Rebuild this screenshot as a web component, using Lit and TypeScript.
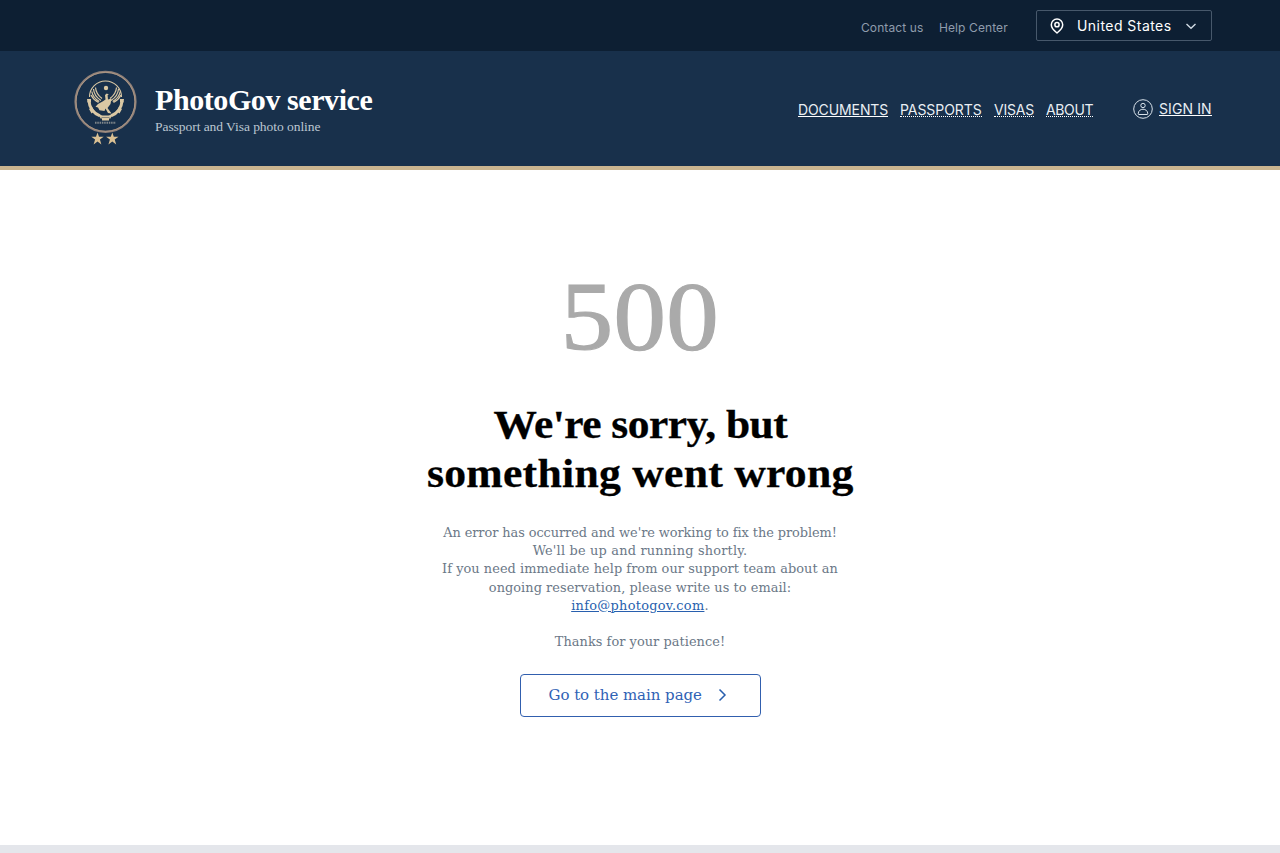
import { LitElement, html, css, svg } from "lit";
import { customElement } from "lit/decorators.js";

const emblem = svg`
  <circle cx="31.500" cy="31.800" r="30" fill="none" stroke="#8f8079" stroke-width="2.200"/>
  <circle cx="31.500" cy="31.800" r="29.500" fill="none" stroke="#b79f88" stroke-width=".7"/>
  <g fill="none" stroke="#dac8a4">
    <path d="M15.500 27A16 16 0 0 1 47.500 27" stroke-width="1.100"/>
    <path d="M15 31A16.500 16.500 0 0 0 26 45.800M48 31A16.500 16.500 0 0 1 37 45.800" stroke-width="3"/>
  </g>
  <g fill="#dac8a4">
    <circle cx="32" cy="18" r="2.200"/>
    <path d="M13 29h4v3.500h-3.500zM46 29h4l-.5 3.500H46zM15 39l3-2 2.500 4-3 2.500zM48 39l-3-2-2.500 4 3 2.500z"/>
    <path d="M31 25l1.800-1.500 2 1-1.200.8.4 4.200 3.500-1-1 5.500-3 4 4 5.500-3.500-.6-2.500-4.400-1 2.500-5-.8-1.500-2.700-2.500-.7 2.500-2.800 5-2.800 2.500-1.800z"/>
    <path d="M25 44.500l3.500 1h6l3.500-1-1.500 4h-1.500v2h-7v-2h-1.500z"/>
  </g>
  <path d="M27.500 47.500h8" stroke="#344457" stroke-width=".5"/>
  <g fill="none" stroke="#dac8a4" stroke-width="1.200">
    <path d="M21.500 17.500q.5 6.500 6.500 11M19.500 19q.5 7 7.500 11.500M17.800 21.500q1 6 7.500 10M17 25q2.500 5 7.500 7.500M42.500 17.500q-.5 6.500-6.500 11M44.500 19q-.5 7-7.500 11.500M46.200 21.500q-1 6-7.500 10M47 25q-2.500 5-7.500 7.500"/>
  </g>
  <path d="M21 52.700h21" stroke="#7f868a" stroke-width="2" stroke-dasharray="1.500 .8"/>
  <g fill="#dac093">
    <path d="M23.500 62.500l1.500 4.300h4.700l-3.800 2.700 1.500 4.900-3.900-2.900-3.900 2.900 1.500-4.900-3.800-2.700H22z"/>
    <path d="M38.300 62.500l1.500 4.300h4.700l-3.800 2.700 1.500 4.900-3.900-2.900-3.900 2.900 1.500-4.900-3.800-2.700h4.700z"/>
  </g>`;

@customElement("app-root")
export class AppRoot extends LitElement {
  static styles = css`
    :host { display: flex; flex-direction: column; height: 853px; overflow: hidden; background: #fff; font-family: Inter, "Liberation Sans", sans-serif; }
    * { box-sizing: border-box; }
    a { color: inherit; white-space: nowrap; }
    svg { display: block; flex: none; }
    .top { height: 51px; flex: none; display: flex; justify-content: flex-end; background: #0d1f33; padding: 10px 68px 0 0; }
    .aux { display: flex; gap: 16px; margin-right: 28px; padding-top: 9px; font-size: 12px; line-height: 18px; letter-spacing: .1px; color: #8f9cac; }
    .aux a { text-decoration: none; }
    .contact { width: 62px; }
    .help { width: 69px; }
    .country { width: 176px; height: 31px; border: 1px solid #47586b; border-radius: 2px; display: flex; align-items: center; padding: 0 13px 0 12px; color: #fff; font-size: 14px; letter-spacing: .45px; }
    .country span { width: 96px; margin-left: 12px; margin-right: 12px; white-space: nowrap; }
    .header { height: 119px; flex: none; background: #18304b; border-bottom: 4px solid #c9b48f; display: flex; padding: 19px 68px 0 74px; }
    .brand { margin-left: 18px; padding-top: 13px; font-family: "Liberation Serif", serif; color: #fff; white-space: nowrap; }
    .name { font-weight: 700; font-size: 30px; line-height: 34px; letter-spacing: -.42px; }
    .tag { margin-top: 1px; font-size: 13.5px; line-height: 17px; letter-spacing: -.05px; color: #bcc7d2; }
    .nav { display: flex; gap: 12px; margin-left: auto; padding-top: 30px; font-size: 14px; line-height: 20px; color: #e9eef3; }
    .nav a, .sign a { text-decoration: none; height: 17px; border-bottom: 1px dotted #fff; }
    .nav a.current, .sign a { border-bottom: 1px solid #fff; }
    .w1 { width: 90px; letter-spacing: -.1px; }
    .w2 { width: 82px; letter-spacing: -.06px; }
    .w3 { width: 40px; letter-spacing: -.2px; }
    .w4 { width: 47px; letter-spacing: -.35px; }
    .sign { display: flex; gap: 6px; margin-left: 40px; padding-top: 29px; font-size: 14px; line-height: 20px; color: #e9eef3; }
    .sign a { width: 53px; letter-spacing: .1px; }
    .main { height: 675px; flex: none; display: flex; flex-direction: column; align-items: center; font-family: "Liberation Serif", serif; text-align: center; white-space: nowrap; }
    .code { margin-top: 91px; height: 112px; line-height: 110px; font-size: 98px; letter-spacing: .3px; color: #aaa; -webkit-text-stroke: 1.2px #aaa; transform: scaleX(1.07); }
    h1 { margin: 27px 0 0; font-size: 41px; line-height: 49px; -webkit-text-stroke: .3px #000; }
    .h1a { letter-spacing: -.5px; transform: scaleX(1.06); }
    .h1b { letter-spacing: .25px; transform: scaleX(1.065); }
    .copy { margin-top: 26px; font-family: "DejaVu Serif", serif; font-size: 12.9px; line-height: 18.2px; color: #6b7887; }
    .copy a { color: #285fae; }
    .l1 { letter-spacing: -.06px; }
    .l2 { letter-spacing: .2px; }
    .l3, .l4, .l7 { letter-spacing: .05px; }
    .l5 { letter-spacing: .3px; }
    .gap { height: 18px; }
    .button { margin-top: 23px; width: 241px; height: 43px; border: 1px solid #315fae; border-radius: 4px; display: flex; align-items: center; padding: 0 0 1px 28px; color: #3062b5; font-family: "DejaVu Serif", serif; font-size: 15px; text-decoration: none; letter-spacing: -.05px; }
    .button span { width: 163px; text-align: left; }
    .footer { height: 8px; flex: none; background: #e4e6eb; }
  `;

  render() {
    return html`
      <div class="top">
        <div class="aux"><a class="contact" href="#">Contact us</a><a class="help" href="#">Help Center</a></div>
        <div class="country">
          <svg width="16" height="16" viewBox="0 0 16 16" fill="none" stroke="#fff" stroke-width="1.5"><path d="M8 15C5 12.7 2.3 10 2.3 6.8a5.7 5.7 0 0 1 11.4 0C13.700 10 11 12.700 8 15z"/><circle cx="8" cy="6.700" r="2.100"/></svg>
          <span>United States</span>
          <svg width="12" height="12" viewBox="0 0 12 12" fill="none" stroke="#d0dae3" stroke-width="1.400"><path d="M1.500 4l4.500 4.300L10.500 4"/></svg>
        </div>
      </div>
      <div class="header">
        <svg width="63" height="76" viewBox="0 0 63 76">${emblem}</svg>
        <div class="brand"><div class="name">PhotoGov service</div><div class="tag">Passport and Visa photo online</div></div>
        <div class="nav">
          <a class="w1 current" href="#">DOCUMENTS</a><a class="w2" href="#">PASSPORTS</a><a class="w3" href="#">VISAS</a><a class="w4" href="#">ABOUT</a>
        </div>
        <div class="sign">
          <svg width="20" height="20" viewBox="0 0 20 20" fill="none" stroke="#d9e2ea" stroke-width="1"><circle cx="10" cy="10" r="9.300"/><circle cx="10" cy="6.500" r="2.200"/><path d="M5.200 14.800c0-6.100 9.600-6.100 9.600 0q0 .7-.8.700H6q-.8 0-.8-.7z"/></svg>
          <a href="#">SIGN IN</a>
        </div>
      </div>
      <div class="main">
        <div class="code">500</div>
        <h1><div class="h1a">We're sorry, but</div><div class="h1b">something went wrong</div></h1>
        <div class="copy">
          <div class="l1">An error has occurred and we're working to fix the problem!</div>
          <div class="l2">We'll be up and running shortly.</div>
          <div class="l3">If you need immediate help from our support team about an</div>
          <div class="l4">ongoing reservation, please write us to email:</div>
          <div class="l5"><a href="#">info@photogov.com</a>.</div>
          <div class="gap"></div>
          <div class="l7">Thanks for your patience!</div>
        </div>
        <a class="button" href="#"><span>Go to the main page</span><svg width="20" height="20" viewBox="0 0 20 20" fill="none" stroke="#285fae" stroke-width="1.500"><path d="M7.500 4.500L13 10l-5.500 5.500"/></svg></a>
      </div>
      <div class="footer"></div>`;
  }
}
